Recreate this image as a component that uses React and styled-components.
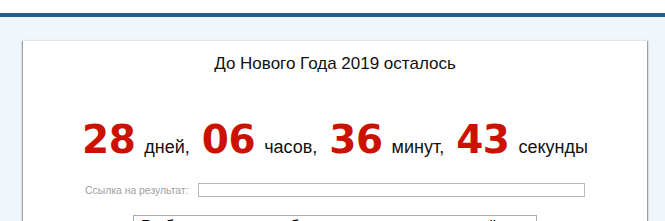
import styled, { createGlobalStyle } from 'styled-components'

const GlobalStyle = createGlobalStyle`
  html, body {
    margin: 0;
    padding: 0;
    background: #eff6fc;
    font-family: "Liberation Sans", Arial, sans-serif;
  }
`;

const Header = styled.div`
  height: 13px;
  background: #fff;
  border-bottom: 4px solid #20618f;
`;

const Page = styled.div`
  padding: 24px 17px 0 22px;
`;

const Panel = styled.div`
  background: #fff;
  border-left: 1px solid #a0a0a0;
  border-right: 1px solid #a0a0a0;
  box-shadow: 0 0 2px rgba(0, 0, 0, 0.25);
  height: 200px;
  display: flex;
  flex-direction: column;
  align-items: center;
`;

const Title = styled.div`
  margin-top: 13px;
  font-size: 17px;
  color: #111;
  line-height: 20px;
`;

const Counter = styled.div`
  margin-top: 41px;
  display: flex;
  align-items: baseline;
  color: #111;
  font-size: 18px;
  line-height: 50px;
`;

const Num = styled.span`
  font-family: "DejaVu Sans", Verdana, sans-serif;
  font-size: 39px;
  font-weight: bold;
  letter-spacing: -0.5px;
  color: #cc1100;
  margin: 0 9px 0 ${p => (p.$first ? 0 : 12)}px;
`;

const LinkRow = styled.div`
  margin-top: 11px;
  display: flex;
  align-items: center;
  gap: 9px;
  align-self: stretch;
  padding-left: 62px;
`;

const LinkLabel = styled.span`
  font-size: 10.4px;
  color: #a0a0a0;
`;

const LinkInput = styled.input`
  width: 381px;
  height: 10px;
  border: 1px solid #b8b8b8;
  padding: 1px 2px;
  margin: 0;
  outline: none;
`;

const Select = styled.select`
  margin-top: 18px;
  width: 404px;
  height: 20px;
  font-family: "Liberation Sans", Arial, sans-serif;
  font-size: 17px;
  line-height: 20px;
  color: #000;
  background: #fff;
  border: 1px solid #a9a9a9;
  padding: 0 3px;
`;

export default function App() {
  return (
    <>
      <GlobalStyle />
      <Header />
      <Page>
        <Panel>
          <Title>До Нового Года 2019 осталось</Title>
          <Counter>
            <Num $first>28</Num>дней,
            <Num>06</Num>часов,
            <Num>36</Num>минут,
            <Num>43</Num>секунды
          </Counter>
          <LinkRow>
            <LinkLabel>Ссылка на результат:</LinkLabel>
            <LinkInput type="text" />
          </LinkRow>
          <Select defaultValue="0">
            <option value="0">Выбрать другое событие или построить своё</option>
          </Select>
        </Panel>
      </Page>
    </>
  );
}
